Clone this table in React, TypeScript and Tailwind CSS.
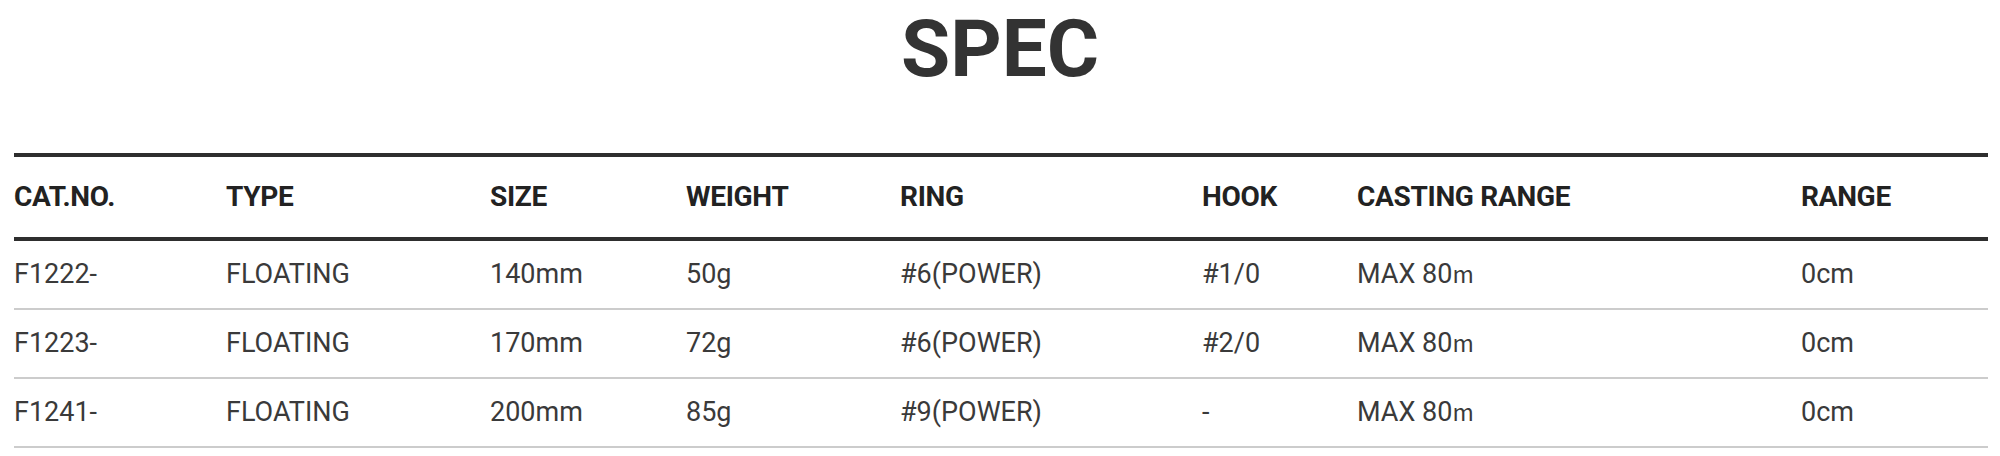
import React from "react";

const columns = [
  "CAT.NO.",
  "TYPE",
  "SIZE",
  "WEIGHT",
  "RING",
  "HOOK",
  "CASTING RANGE",
  "RANGE",
];

const rows = [
  ["F1222-", "FLOATING", "140mm", "50g", "#6(POWER)", "#1/0", "MAX 80", "0cm"],
  ["F1223-", "FLOATING", "170mm", "72g", "#6(POWER)", "#2/0", "MAX 80", "0cm"],
  ["F1241-", "FLOATING", "200mm", "85g", "#9(POWER)", "-", "MAX 80", "0cm"],
];

// column widths measured from the spec sheet
const grid = "grid grid-cols-[212px_264px_196px_214px_302px_155px_444px_187px] items-center";

export default function App() {
  return (
    <div className="w-[2000px] h-[456px] bg-white font-['Roboto','Liberation_Sans',sans-serif] overflow-hidden">
      {/* Title */}
      <h2 className="pt-[9px] text-center text-[80px] leading-none font-bold text-[#333333]">
        SPEC
      </h2>

      {/* Spec table */}
      <div className="mx-[14px] mt-[64px] w-[1974px]">
        <div className={`${grid} h-[88px] border-y-4 border-[#2e2e2e]`}>
          {columns.map((c) => (
            <div key={c} className="text-[28px] font-bold text-[#222222] tracking-[-0.3px]">
              {c}
            </div>
          ))}
        </div>

        {rows.map((r, idx) => (
          <div key={idx} className={`${grid} h-[69px] border-b-2 border-[#cccccc]`}>
            {r.map((cell, i) => (
              <div key={i} className="text-[27px] text-[#3a3a3a]">
                {cell}
                {i === 6 && (
                  <span className="font-['Noto_Sans_CJK_KR',sans-serif] text-[23px]">m</span>
                )}
              </div>
            ))}
          </div>
        ))}
      </div>
    </div>
  );
}
